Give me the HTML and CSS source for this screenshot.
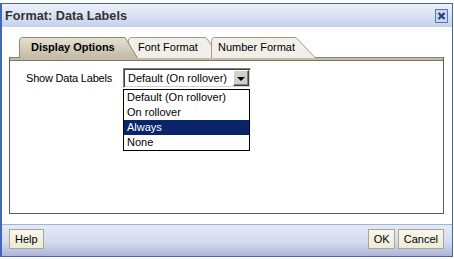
FILE: index.html
```html
<!DOCTYPE html>
<html>
<head>
<meta charset="utf-8">
<link rel="stylesheet" href="styles.css">
</head>
<body>
<div class="dialog">
  <div class="titlebar">
    <span class="title">Format: Data Labels</span>
    <span class="close">
      <svg width="13" height="14" viewBox="0 0 13 14">
        <rect x="0.5" y="0.5" width="12" height="13" fill="#c9d6ee" stroke="#5676b4"/>
        <path d="M3.5,4 L9.5,10 M9.5,4 L3.5,10" stroke="#23407e" stroke-width="2.2"/>
      </svg>
    </span>
  </div>
  <div class="content">
    <div class="tabs">
      <div class="tab tab-display active">
        <svg class="tab-bg" width="119" height="21" viewBox="0 0 119 21">
          <defs>
            <linearGradient id="ga" x1="0" y1="0" x2="0" y2="1">
              <stop offset="0" stop-color="#e6e1d3"/>
              <stop offset="1" stop-color="#c2baa4"/>
            </linearGradient>
          </defs>
          <path d="M0.5,21 V3.5 Q0.5,0.5 3.5,0.5 H106 L118.5,21" fill="url(#ga)" stroke="#8e8776"/>
        </svg>
        <span>Display Options</span>
      </div>
      <div class="tab tab-font">
        <svg class="tab-bg" width="93" height="21" viewBox="0 0 93 21">
          <path d="M0.5,21 V3.5 Q0.5,0.5 3.5,0.5 H78 L92.5,21" fill="#f1efe7" stroke="#a09a8a"/>
        </svg>
        <span>Font Format</span>
      </div>
      <div class="tab tab-number">
        <svg class="tab-bg" width="105" height="21" viewBox="0 0 105 21">
          <path d="M0.5,21 V3.5 Q0.5,0.5 3.5,0.5 H85 L104.5,21" fill="#f1efe7" stroke="#a09a8a"/>
        </svg>
        <span>Number Format</span>
      </div>
    </div>
    <div class="panel">
      <div class="row">
        <span class="label">Show Data Labels</span>
        <div class="combo">
          <div class="select">
            <span class="value">Default (On rollover)</span>
            <span class="arrow"><span class="tri"></span></span>
          </div>
          <ul class="list">
            <li>Default (On rollover)</li>
            <li>On rollover</li>
            <li class="selected">Always</li>
            <li>None</li>
          </ul>
        </div>
      </div>
    </div>
  </div>
  <div class="footer">
    <button class="btn btn-help">Help</button>
    <span class="spacer"></span>
    <button class="btn btn-ok">OK</button>
    <button class="btn btn-cancel">Cancel</button>
  </div>
</div>
</body>
</html>
```

FILE: styles.css
```css
html, body {
  margin: 0;
  padding: 0;
  background: #ffffff;
}
body {
  width: 454px;
  height: 259px;
  overflow: hidden;
  font-family: "Liberation Sans", Arial, sans-serif;
  font-size: 11px;
  color: #000;
}
.dialog {
  margin-top: 3px;
  width: 450px;
  height: 252px;
  border: 1px solid #4168b4;
  border-left-width: 2px;
  display: flex;
  flex-direction: column;
  background: #fff;
}
.titlebar {
  height: 23px;
  flex: none;
  display: flex;
  align-items: center;
  justify-content: space-between;
  padding: 0 4px 0 3px;
  background: linear-gradient(#eef1fa, #c5d1eb);
}
.title {
  font-weight: bold;
  font-size: 12.7px;
  color: #333;
}
.close {
  display: flex;
  margin-top: 1px;
}
.content {
  flex: 1;
  padding: 10px 8px 10px 7px;
  display: flex;
  flex-direction: column;
}
.tabs {
  display: flex;
  height: 20px;
  flex: none;
  padding-left: 10px;
  position: relative;
  z-index: 1;
}
.tab {
  position: relative;
  height: 20px;
  display: flex;
  align-items: center;
  box-sizing: border-box;
  white-space: nowrap;
}
.tab-bg {
  position: absolute;
  left: 0;
  top: 0;
}
.tab span {
  position: relative;
}
.tab-display {
  width: 119px;
  padding-left: 12px;
  font-weight: bold;
  z-index: 3;
}
.tab-font {
  width: 93px;
  margin-left: -10px;
  padding-left: 10px;
  z-index: 1;
}
.tab-number {
  width: 105px;
  margin-left: -10px;
  padding-left: 7px;
  z-index: 2;
}
.panel {
  flex: 1;
  border-top: 1px solid #8a8270;
  box-shadow: inset 0 2px 0 #c4bcaa, inset 0 3px 0 #7e7766;
  border-left: 1px solid #5c5c5c;
  border-right: 1px solid #5c5c5c;
  border-bottom: 1px solid #5c5c5c;
  padding: 10px 0 0 16px;
}
.row {
  display: flex;
  align-items: flex-start;
}
.label {
  width: 97px;
  line-height: 20px;
  letter-spacing: -0.2px;
}
.combo {
  position: relative;
}
.select {
  width: 122px;
  height: 16px;
  border: 1px solid;
  border-color: #7f7f7f #ffffff #ffffff #7f7f7f;
  box-shadow: inset 1px 1px 0 #404040, inset -1px -1px 0 #d4d0c8;
  padding: 1px 1px 1px 3px;
  display: flex;
  align-items: center;
  justify-content: space-between;
  background: #fff;
}
.value {
  padding-left: 1px;
}
.arrow {
  width: 16px;
  height: 16px;
  box-sizing: border-box;
  background: #d4d0c8;
  border: 1px solid;
  border-color: #ffffff #404040 #404040 #ffffff;
  box-shadow: inset -1px -1px 0 #808080;
  display: flex;
  align-items: center;
  justify-content: center;
}
.tri {
  width: 0;
  height: 0;
  border-left: 4px solid transparent;
  border-right: 4px solid transparent;
  border-top: 4px solid #000;
  margin-top: 1px;
}
.list {
  position: absolute;
  left: 0;
  top: 21px;
  width: 125px;
  margin: 0;
  padding: 0;
  list-style: none;
  border: 1px solid #000;
  background: #fff;
}
.list li {
  height: 15px;
  line-height: 15px;
  padding-left: 3px;
}
.list li.selected {
  background: #0a246a;
  color: #fff;
}
.footer {
  height: 31px;
  flex: none;
  box-sizing: border-box;
  height: 32px;
  border-top: 1px solid #a3b1dc;
  background: linear-gradient(#e5eaf8, #d4dbf0 55%, #aeb5d6);
  display: flex;
  align-items: flex-start;
  padding: 4px 8px 0 7px;
}
.spacer {
  flex: 1;
}
.btn {
  font-family: "Liberation Sans", Arial, sans-serif;
  font-size: 11px;
  height: 20px;
  margin: 0;
  padding: 0 5px;
  border: 1px solid #aaa78e;
  background: linear-gradient(#f8f8ec, #ecebd8);
  color: #000;
}
.btn-ok {
  width: 27px;
  margin-right: 3px;
}
```
